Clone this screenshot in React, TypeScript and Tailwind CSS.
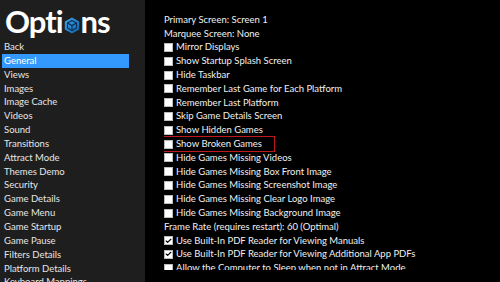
import { Check } from "lucide-react";

const menu = [
  "Back",
  "General",
  "Views",
  "Images",
  "Image Cache",
  "Videos",
  "Sound",
  "Transitions",
  "Attract Mode",
  "Themes Demo",
  "Security",
  "Game Details",
  "Game Menu",
  "Game Startup",
  "Game Pause",
  "Filters Details",
  "Platform Details",
  "Keyboard Mappings",
];

type Row = { label: string; box?: boolean; checked?: boolean; highlight?: boolean };

const rows: Row[] = [
  { label: "Primary Screen: Screen 1" },
  { label: "Marquee Screen: None" },
  { label: "Mirror Displays", box: true },
  { label: "Show Startup Splash Screen", box: true },
  { label: "Hide Taskbar", box: true },
  { label: "Remember Last Game for Each Platform", box: true },
  { label: "Remember Last Platform", box: true },
  { label: "Skip Game Details Screen", box: true },
  { label: "Show Hidden Games", box: true },
  { label: "Show Broken Games", box: true, highlight: true },
  { label: "Hide Games Missing Videos", box: true },
  { label: "Hide Games Missing Box Front Image", box: true },
  { label: "Hide Games Missing Screenshot Image", box: true },
  { label: "Hide Games Missing Clear Logo Image", box: true },
  { label: "Hide Games Missing Background Image", box: true },
  { label: "Frame Rate (requires restart): 60 (Optimal)" },
  { label: "Use Built-In PDF Reader for Viewing Manuals", box: true, checked: true },
  { label: "Use Built-In PDF Reader for Viewing Additional App PDFs", box: true, checked: true },
  { label: "Allow the Computer to Sleep when not in Attract Mode", box: true },
];

function CubeIcon() {
  return (
    <svg width="16" height="17" viewBox="0 0 16 17" className="mx-[1px] mb-[6px]">
      <defs>
        <linearGradient id="cg" x1="0" y1="0" x2="1" y2="1">
          <stop offset="0" stopColor="#3fa9f0" />
          <stop offset="1" stopColor="#0f5fa8" />
        </linearGradient>
      </defs>
      <polygon points="8,0.5 15.2,4.5 15.2,12.5 8,16.5 0.8,12.5 0.8,4.5" fill="url(#cg)" />
      <polygon points="8,3.5 12.5,6 12.5,11 8,13.5 3.5,11 3.5,6" fill="none" stroke="#0b2e55" strokeWidth="1.1" />
      <polyline points="3.5,6 8,8.5 12.5,6" fill="none" stroke="#0b2e55" strokeWidth="1.1" />
      <line x1="8" y1="8.5" x2="8" y2="13.5" stroke="#0b2e55" strokeWidth="1.1" />
    </svg>
  );
}

export default function App() {
  return (
    <div
      className="flex w-[500px] h-[282px] overflow-hidden bg-black text-[9.5px]"
      style={{ fontFamily: 'Lato, "Open Sans", sans-serif' }}
    >
      {/* Sidebar */}
      <div className="w-[145px] shrink-0 bg-[#1e1e1e] overflow-hidden">
        <div className="flex items-end h-[40px] pl-[5px] text-white font-bold text-[31px] leading-[38px] tracking-[-1px]">
          <span>Opti</span>
          <CubeIcon />
          <span>ns</span>
        </div>
        <div className="pl-[2px] w-[129px]">
          {menu.map((m) => (
            <div
              key={m}
              className={`h-[13.85px] leading-[13.85px] pl-[2px] whitespace-nowrap ${
                m === "General" ? "bg-[#3399ff] text-white" : "text-[#e6e6e6]"
              }`}
            >
              {m}
            </div>
          ))}
        </div>
      </div>

      {/* Content */}
      <div className="flex-1 pl-[19px] pt-[13px]">
        <div className="h-[257px] overflow-hidden">
          {rows.map((r) => (
            <div
              key={r.label}
              className="relative flex items-center gap-[3px] h-[13.8px] whitespace-nowrap text-[#f0f0f0]"
            >
              {r.highlight && (
                <div className="absolute left-[-9px] top-[-1px] w-[120px] h-[16px] border border-[#c0181f]" />
              )}
              {r.box && (
                <span className="flex items-center justify-center w-[9px] h-[9px] bg-white border border-[#bbbbbb]">
                  {r.checked && <Check className="w-[8px] h-[8px] text-black" strokeWidth={4} />}
                </span>
              )}
              <span>{r.label}</span>
            </div>
          ))}
        </div>
      </div>
    </div>
  );
}
